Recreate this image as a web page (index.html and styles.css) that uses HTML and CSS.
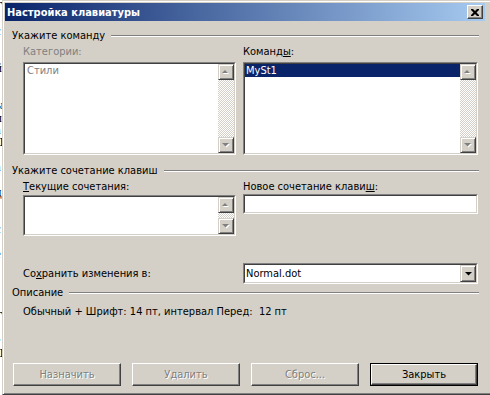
FILE: index.html
```html
<!DOCTYPE html>
<html lang="ru">
<head>
  <meta charset="UTF-8">
  <title>Настройка клавиатуры</title>
  <link rel="stylesheet" href="styles.css">
</head>
<body>
  <div class="desk">
    <p>Г</p><p>I</p><p>є</p><p>:</p><p>]</p><p>й</p><p>I</p><p>:</p><p>ы</p><p>п</p><p>а</p>
    <p>Д</p><p>]</p><p>а</p><p>I</p><p>д</p><p>:</p><p>:</p><p>є</p><p>[</p><p>е</p><p>[</p>
    <p>:</p><p>;</p><p>I</p><p>Г</p><p>I</p><p>г</p><p>Д</p><p>I</p><p>I</p><p>I</p>
  </div>

  <div class="window">
    <div class="titlebar">
      <span class="title">Настройка клавиатуры</span>
      <span class="caption-btn">
        <svg width="8" height="7" viewBox="0 0 8 7">
          <path d="M0 0h2l2 2 2-2h2v1l-2.5 2.5L8 6v1H6L4 5 2 7H0V6l2.5-2.5L0 1z" fill="#000"/>
        </svg>
      </span>
    </div>

    <div class="body">
      <div class="group-head"><span>Укажите команду</span><i class="rule"></i></div>
      <div class="cols">
        <div class="col">
          <div class="lbl disabled">Категории:</div>
          <div class="sunken list-tall">
            <div class="sunken-in">
              <div class="items">
                <div class="item gray">Стили</div>
              </div>
              <div class="vscroll">
                <span class="sbtn"><svg width="8" height="5" viewBox="0 0 8 5"><path d="M4 1l3 3H1z" fill="#fff"/><path d="M3 0l3 3H0z" fill="#808080"/></svg></span>
                <span class="track"></span>
                <span class="sbtn"><svg width="8" height="5" viewBox="0 0 8 5"><path d="M1 1h7L4.5 4.5z" fill="#fff"/><path d="M0 0h7L3.5 3.5z" fill="#808080"/></svg></span>
              </div>
            </div>
          </div>
        </div>
        <div class="col">
          <div class="lbl">Команд<u>ы</u>:</div>
          <div class="sunken list-tall">
            <div class="sunken-in">
              <div class="items">
                <div class="item selected">MySt1</div>
              </div>
              <div class="vscroll">
                <span class="sbtn"><svg width="8" height="5" viewBox="0 0 8 5"><path d="M4 1l3 3H1z" fill="#fff"/><path d="M3 0l3 3H0z" fill="#808080"/></svg></span>
                <span class="track"></span>
                <span class="sbtn"><svg width="8" height="5" viewBox="0 0 8 5"><path d="M1 1h7L4.5 4.5z" fill="#fff"/><path d="M0 0h7L3.5 3.5z" fill="#808080"/></svg></span>
              </div>
            </div>
          </div>
        </div>
      </div>

      <div class="group-head second"><span>Укажите сочетание клавиш</span><i class="rule"></i></div>
      <div class="cols">
        <div class="col">
          <div class="lbl"><u>Т</u>екущие сочетания:</div>
          <div class="sunken list-short">
            <div class="sunken-in">
              <div class="items"></div>
              <div class="vscroll">
                <span class="sbtn"><svg width="8" height="5" viewBox="0 0 8 5"><path d="M4 1l3 3H1z" fill="#fff"/><path d="M3 0l3 3H0z" fill="#808080"/></svg></span>
                <span class="track"></span>
                <span class="sbtn"><svg width="8" height="5" viewBox="0 0 8 5"><path d="M1 1h7L4.5 4.5z" fill="#fff"/><path d="M0 0h7L3.5 3.5z" fill="#808080"/></svg></span>
              </div>
            </div>
          </div>
        </div>
        <div class="col">
          <div class="lbl">Новое сочетание клави<u>ш</u>:</div>
          <div class="sunken field">
            <div class="sunken-in"></div>
          </div>
        </div>
      </div>

      <div class="cols save-row">
        <div class="col save-lbl">Со<u>х</u>ранить изменения в:</div>
        <div class="col">
          <div class="sunken combo">
            <div class="sunken-in">
              <span class="combo-text">Normal.dot</span>
              <span class="sbtn drop"><svg width="7" height="4" viewBox="0 0 7 4"><path d="M0 0h7L3.5 3.5z" fill="#000"/></svg></span>
            </div>
          </div>
        </div>
      </div>

      <div class="group-head third"><span>Описание</span><i class="rule"></i></div>
      <div class="desc">Обычный + Шрифт: 14 пт, интервал Перед:&nbsp; 12 пт</div>

      <div class="buttons">
        <span class="btn disabled">Назначить</span>
        <span class="btn disabled">Удалить</span>
        <span class="btn disabled">Сброс...</span>
        <span class="btn default"><span class="btn-in">Закрыть</span></span>
      </div>
    </div>
  </div>
</body>
</html>
```

FILE: styles.css
```css
* {
  box-sizing: border-box;
}
body {
  margin: 0;
  width: 490px;
  height: 395px;
  overflow: hidden;
  display: flex;
  background: #d4d0c8;
  font-family: 'DejaVu Sans Condensed', 'Liberation Sans', sans-serif;
  font-size: 11px;
  color: #000;
}
/* the document page behind the dialog */
.desk {
  flex: none;
  width: 2px;
  height: 395px;
  overflow: hidden;
  background: #fff;
  font-family: 'Liberation Serif', serif;
  font-size: 13px;
  line-height: 12.4px;
}
.desk p {
  margin: 0 0 0 -5px;
  white-space: nowrap;
}
.window {
  flex: none;
  width: 490px;
  height: 395px;
  background: #d4d0c8;
  border: 1px solid;
  border-color: #d4d0c8 #404040 #404040 #d4d0c8;
  box-shadow: inset 1px 1px #fff, inset -1px -1px #808080;
  padding: 2px;
}
.titlebar {
  width: 480px;
  height: 18px;
  padding: 0 2px;
  display: flex;
  align-items: center;
  justify-content: space-between;
  background: linear-gradient(to right, #0a246a, #a6caf0);
  color: #fff;
  font-weight: bold;
}
.caption-btn {
  width: 16px;
  height: 14px;
  display: flex;
  align-items: center;
  justify-content: center;
  background: #d4d0c8;
  border: 1px solid;
  border-color: #fff #404040 #404040 #fff;
  box-shadow: inset -1px -1px #808080;
}
.body {
  padding: 8px 10px 0 7px;
}
.group-head {
  display: flex;
  align-items: center;
  height: 13px;
  line-height: 13px;
  gap: 6px;
}
.group-head.second {
  margin-top: 9px;
}
.group-head.third {
  margin-top: 2px;
}
.rule {
  flex: 1;
  height: 2px;
  border-top: 1px solid #808080;
  border-bottom: 1px solid #fff;
}
.cols {
  display: grid;
  grid-template-columns: 213px 235px;
  column-gap: 7px;
  margin-left: 11px;
}
.lbl {
  height: 13px;
  line-height: 13px;
  margin-top: 3px;
  margin-bottom: 4px;
}
.second + .cols .lbl {
  margin-bottom: 2px;
}
.disabled {
  color: #808080;
}
.sunken {
  border: 1px solid;
  border-color: #808080 #fff #fff #808080;
  background: #fff;
}
.sunken-in {
  height: 100%;
  display: flex;
  border: 1px solid;
  border-color: #404040 #d4d0c8 #d4d0c8 #404040;
}
.list-tall {
  height: 93px;
}
.list-short {
  height: 41px;
}
.field {
  height: 20px;
  margin-top: -1px;
}
.items {
  flex: 1;
}
.item {
  height: 13px;
  line-height: 13px;
  padding-left: 1px;
}
.item.gray {
  color: #808080;
  padding-left: 2px;
}
.item.selected {
  background: #0a246a;
  color: #fff;
}
.vscroll {
  width: 16px;
  display: flex;
  flex-direction: column;
}
.sbtn {
  flex: none;
  width: 16px;
  height: 16px;
  display: flex;
  align-items: center;
  justify-content: center;
  background: #d4d0c8;
  border: 1px solid;
  border-color: #d4d0c8 #404040 #404040 #d4d0c8;
  box-shadow: inset 1px 1px #fff, inset -1px -1px #808080;
}
.track {
  flex: 1;
  background: repeating-conic-gradient(#d4d0c8 0 25%, #fff 0 50%) 0 0 / 2px 2px;
}
.save-row {
  margin-top: 27px;
  align-items: center;
}
.save-lbl {
  line-height: 13px;
}
.combo {
  height: 21px;
}
.combo-text {
  flex: 1;
  line-height: 17px;
  padding-left: 1px;
}
.sbtn.drop {
  height: 17px;
}
.desc {
  margin: 6px 0 0 11px;
  height: 13px;
  line-height: 13px;
}
.buttons {
  display: flex;
  gap: 11px;
  margin: 45px 0 0 1px;
}
.btn {
  width: 108px;
  height: 23px;
  display: flex;
  align-items: center;
  justify-content: center;
  border: 1px solid;
  border-color: #fff #404040 #404040 #fff;
  box-shadow: inset -1px -1px #808080;
}
.btn.disabled {
  color: #808080;
  text-shadow: 1px 1px #fff;
}
.btn.default {
  border-color: #000;
  box-shadow: none;
}
.btn-in {
  width: 100%;
  height: 100%;
  display: flex;
  align-items: center;
  justify-content: center;
  border: 1px solid;
  border-color: #fff #404040 #404040 #fff;
  box-shadow: inset -1px -1px #808080;
}
u {
  text-decoration: underline;
  text-underline-offset: 1px;
}
```
